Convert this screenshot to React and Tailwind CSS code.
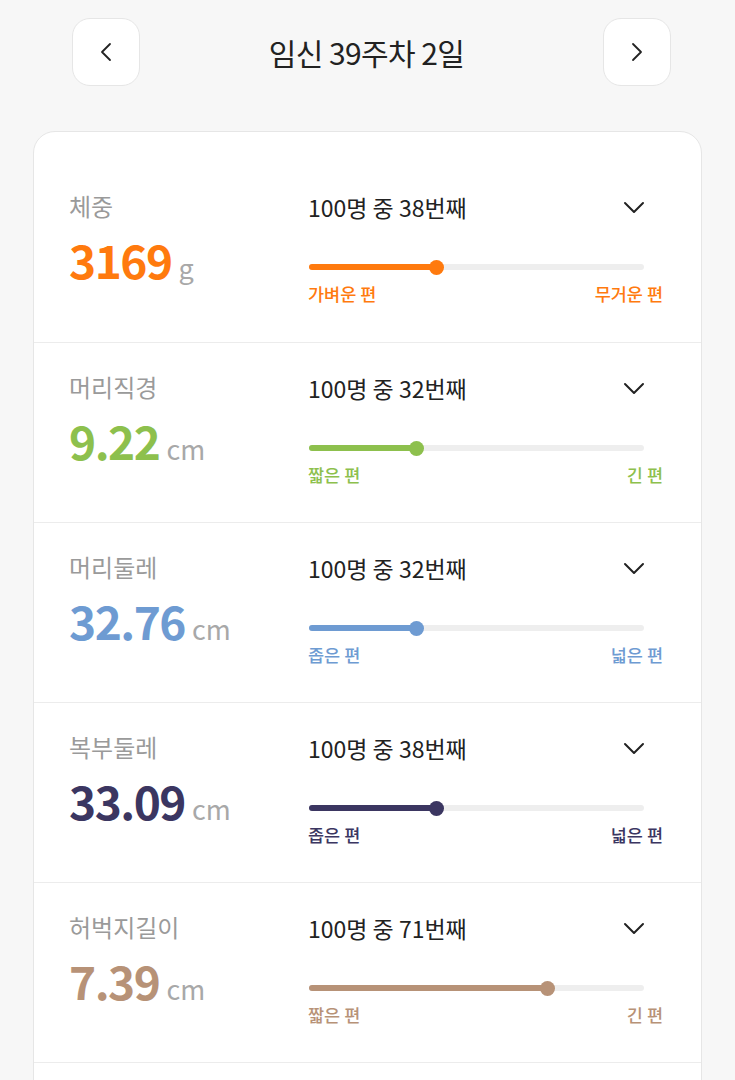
import React from "react";

const FONT = { fontFamily: '"Noto Sans CJK KR", "Noto Sans", sans-serif' };

const stats = [
  { label: "체중", value: "3169", unit: "g", rank: 38, color: "#ff7a0e", low: "가벼운 편", high: "무거운 편" },
  { label: "머리직경", value: "9.22", unit: "cm", rank: 32, color: "#8dc04d", low: "짧은 편", high: "긴 편" },
  { label: "머리둘레", value: "32.76", unit: "cm", rank: 32, color: "#6e9bd2", low: "좁은 편", high: "넓은 편" },
  { label: "복부둘레", value: "33.09", unit: "cm", rank: 38, color: "#3b3661", low: "좁은 편", high: "넓은 편" },
  { label: "허벅지길이", value: "7.39", unit: "cm", rank: 71, color: "#b79277", low: "짧은 편", high: "긴 편" },
];

const Chevron = ({ dir }) => {
  const d = {
    left: "M14 4 L6 12 L14 20",
    right: "M6 4 L14 12 L6 20",
    down: "M2 2 L11 11 L20 2",
  }[dir];
  if (dir === "down") {
    return (
      <svg width="22" height="13" viewBox="0 0 22 13" fill="none">
        <path d={d} stroke="#222" strokeWidth="2" strokeLinecap="round" strokeLinejoin="round" />
      </svg>
    );
  }
  return (
    <svg width="20" height="24" viewBox="0 0 20 24" fill="none">
      <path d={d} stroke="#222" strokeWidth="1.8" strokeLinecap="round" strokeLinejoin="round" />
    </svg>
  );
};

const StatRow = ({ stat, first }) => (
  <div className={`flex border-b border-[#ececec] pl-[35px] pr-[38px] ${first ? "pt-[58px] h-[211px]" : "pt-[28px] h-[180px]"}`}>
    <div className="w-[239px] shrink-0">
      <div className="text-[24px] leading-[32px] text-[#9a9a9a]">{stat.label}</div>
      <div className="mt-[9px] flex items-baseline">
        <span className="text-[46px] leading-[56px] font-bold tracking-[-1.5px]" style={{ color: stat.color }}>
          {stat.value}
        </span>
        <span className="ml-[7px] text-[27px] text-[#a8a8a8]">{stat.unit}</span>
      </div>
    </div>
    <div className="flex-1">
      <div className="flex items-center justify-between pr-[18px]">
        <span className="text-[23px] leading-[34px] text-[#222]">
          100명 중 {stat.rank}번째
        </span>
        <Chevron dir="down" />
      </div>
      <div className="mt-[40px] mr-[19px] ml-[1px] relative h-[6px] rounded-full bg-[#eeeeee]">
        <div className="h-full rounded-full" style={{ width: `${stat.rank}%`, background: stat.color }} />
        <div
          className="absolute top-1/2 w-[15px] h-[15px] -ml-[7px] -mt-[7.5px] rounded-full"
          style={{ left: `${stat.rank}%`, background: stat.color }}
        />
      </div>
      <div className="mt-[12px] flex justify-between text-[17.5px] leading-[24px] font-medium" style={{ color: stat.color }}>
        <span>{stat.low}</span>
        <span>{stat.high}</span>
      </div>
    </div>
  </div>
);

export default function App() {
  return (
    <div className="min-h-[1080px] bg-[#f7f7f7] overflow-hidden" style={FONT}>
      <div className="flex items-center justify-between pt-[18px] pl-[72px] pr-[64px]">
        <button className="w-[68px] h-[68px] rounded-[18px] bg-white border border-[#e6e6e6] flex items-center justify-center">
          <Chevron dir="left" />
        </button>
        <h1 className="mr-[10px] text-[30px] text-[#222] tracking-[-0.6px]">임신 39주차 2일</h1>
        <button className="w-[68px] h-[68px] rounded-[18px] bg-white border border-[#e6e6e6] flex items-center justify-center">
          <Chevron dir="right" />
        </button>
      </div>
      <div className="mt-[45px] ml-[33px] mr-[33px] bg-white border border-[#e6e6e6] rounded-t-[22px]">
        {stats.map((s, i) => (
          <StatRow key={s.label} stat={s} first={i === 0} />
        ))}
        <div className="h-[120px]" />
      </div>
    </div>
  );
}
